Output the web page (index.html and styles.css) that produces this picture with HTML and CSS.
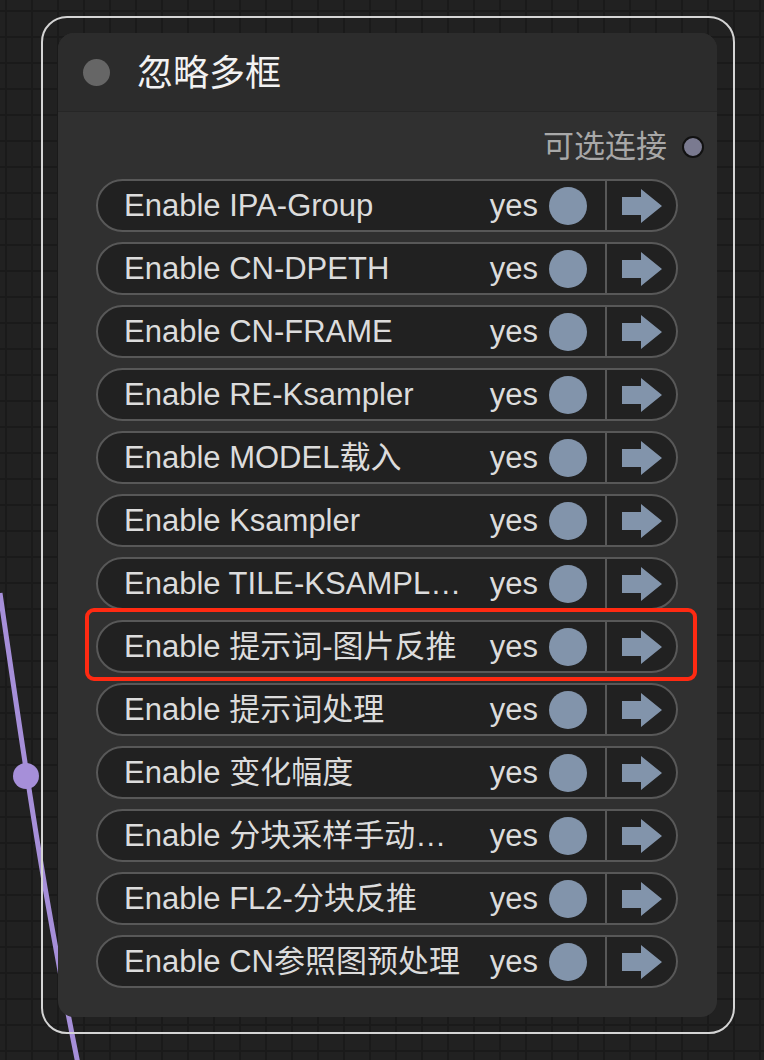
FILE: index.html
```html
<!DOCTYPE html>
<html lang="zh-CN">
  <head>
    <meta charset="UTF-8" />
    <meta name="viewport" content="width=device-width, initial-scale=1.0" />
    <title>忽略多框</title>
    <link rel="stylesheet" href="styles.css">
  </head>
  <body>
    <div class="canvas">
      <!-- 连线（在节点下面） -->
      <svg class="wire" width="120" height="1060" viewBox="0 0 120 1060">
        <path d="M 0 593 C 30 800, 45 900, 78 1064" />
        <circle cx="26" cy="776" r="13" />
      </svg>

      <div class="node-select">
        <div class="node">
          <div class="node-title">
            <span class="title-dot"></span>
            <span class="title-text">忽略多框</span>
          </div>
          <div class="node-body">
            <div class="output-row">
              <span class="output-label">可选连接</span>
              <span class="slot"></span>
            </div>

            <div class="widget">
              <span class="widget-label">Enable IPA-Group</span>
              <span class="widget-value">yes</span>
              <span class="toggle"></span>
              <span class="go"><svg viewBox="0 0 40 34"><path d="M0 8 H19 V0 L40 17 L19 34 V26 H0 Z" /></svg></span>
            </div>
            <div class="widget">
              <span class="widget-label">Enable CN-DPETH</span>
              <span class="widget-value">yes</span>
              <span class="toggle"></span>
              <span class="go"><svg viewBox="0 0 40 34"><path d="M0 8 H19 V0 L40 17 L19 34 V26 H0 Z" /></svg></span>
            </div>
            <div class="widget">
              <span class="widget-label">Enable CN-FRAME</span>
              <span class="widget-value">yes</span>
              <span class="toggle"></span>
              <span class="go"><svg viewBox="0 0 40 34"><path d="M0 8 H19 V0 L40 17 L19 34 V26 H0 Z" /></svg></span>
            </div>
            <div class="widget">
              <span class="widget-label">Enable RE-Ksampler</span>
              <span class="widget-value">yes</span>
              <span class="toggle"></span>
              <span class="go"><svg viewBox="0 0 40 34"><path d="M0 8 H19 V0 L40 17 L19 34 V26 H0 Z" /></svg></span>
            </div>
            <div class="widget">
              <span class="widget-label">Enable MODEL载入</span>
              <span class="widget-value">yes</span>
              <span class="toggle"></span>
              <span class="go"><svg viewBox="0 0 40 34"><path d="M0 8 H19 V0 L40 17 L19 34 V26 H0 Z" /></svg></span>
            </div>
            <div class="widget">
              <span class="widget-label">Enable Ksampler</span>
              <span class="widget-value">yes</span>
              <span class="toggle"></span>
              <span class="go"><svg viewBox="0 0 40 34"><path d="M0 8 H19 V0 L40 17 L19 34 V26 H0 Z" /></svg></span>
            </div>
            <div class="widget">
              <span class="widget-label">Enable TILE-KSAMPL…</span>
              <span class="widget-value">yes</span>
              <span class="toggle"></span>
              <span class="go"><svg viewBox="0 0 40 34"><path d="M0 8 H19 V0 L40 17 L19 34 V26 H0 Z" /></svg></span>
            </div>
            <div class="widget">
              <span class="widget-label">Enable 提示词-图片反推</span>
              <span class="widget-value">yes</span>
              <span class="toggle"></span>
              <span class="go"><svg viewBox="0 0 40 34"><path d="M0 8 H19 V0 L40 17 L19 34 V26 H0 Z" /></svg></span>
            </div>
            <div class="widget">
              <span class="widget-label">Enable 提示词处理</span>
              <span class="widget-value">yes</span>
              <span class="toggle"></span>
              <span class="go"><svg viewBox="0 0 40 34"><path d="M0 8 H19 V0 L40 17 L19 34 V26 H0 Z" /></svg></span>
            </div>
            <div class="widget">
              <span class="widget-label">Enable 变化幅度</span>
              <span class="widget-value">yes</span>
              <span class="toggle"></span>
              <span class="go"><svg viewBox="0 0 40 34"><path d="M0 8 H19 V0 L40 17 L19 34 V26 H0 Z" /></svg></span>
            </div>
            <div class="widget">
              <span class="widget-label">Enable 分块采样手动…</span>
              <span class="widget-value">yes</span>
              <span class="toggle"></span>
              <span class="go"><svg viewBox="0 0 40 34"><path d="M0 8 H19 V0 L40 17 L19 34 V26 H0 Z" /></svg></span>
            </div>
            <div class="widget">
              <span class="widget-label">Enable FL2-分块反推</span>
              <span class="widget-value">yes</span>
              <span class="toggle"></span>
              <span class="go"><svg viewBox="0 0 40 34"><path d="M0 8 H19 V0 L40 17 L19 34 V26 H0 Z" /></svg></span>
            </div>
            <div class="widget">
              <span class="widget-label">Enable CN参照图预处理</span>
              <span class="widget-value">yes</span>
              <span class="toggle"></span>
              <span class="go"><svg viewBox="0 0 40 34"><path d="M0 8 H19 V0 L40 17 L19 34 V26 H0 Z" /></svg></span>
            </div>
          </div>
        </div>
      </div>

      <!-- 红框标注 -->
      <div class="highlight"></div>
    </div>
  </body>
</html>
```

FILE: styles.css
```css
:root {
  --canvas-bg: #212121;
  --grid-line: #1a1a1a;
  --node-bg: #303030;
  --title-bg: #2c2c2c;
  --widget-bg: #212121;
  --widget-border: #585858;
  --text: #dcdcdc;
  --slate: #8294ab;
  --wire: #a68fd9;
}

body {
  margin: 0;
  overflow: hidden;
  font-family: "Liberation Sans", "Noto Sans CJK SC", sans-serif;
}

.canvas {
  position: relative;
  width: 764px;
  height: 1060px;
  overflow: hidden;
  background-color: var(--canvas-bg);
  background-image:
    linear-gradient(to right, var(--grid-line) 2px, transparent 2px),
    linear-gradient(to bottom, var(--grid-line) 2px, transparent 2px);
  background-size: 26px 26px;
  background-position: 5px 10px;
}

.wire {
  position: absolute;
  left: 0;
  top: 0;
}
.wire path {
  fill: none;
  stroke: var(--wire);
  stroke-width: 5;
}
.wire circle {
  fill: var(--wire);
}

/* 选中外框 + 节点 */
.node-select {
  position: absolute;
  left: 41px;
  top: 16px;
  width: 694px;
  height: 1018px;
  box-sizing: border-box;
  padding: 15px 16px 15px 15px;
  border: 2px solid #d4d4d4;
  border-radius: 26px;
  display: flex;
}

.node {
  flex: 1;
  display: flex;
  flex-direction: column;
  background: var(--node-bg);
  border-radius: 16px;
  overflow: hidden;
}

.node-title {
  height: 79px;
  box-sizing: border-box;
  flex-shrink: 0;
  display: flex;
  align-items: center;
  background: var(--title-bg);
  border-bottom: 1px solid #262626;
  padding-left: 25px;
}

.title-dot {
  width: 27px;
  height: 27px;
  border-radius: 50%;
  background: #666;
}

.title-text {
  margin-left: 27px;
  font-size: 36px;
  color: #f2f2f2;
  line-height: 1.2;
  padding-top: 4px;
}

.node-body {
  display: flex;
  flex-direction: column;
  gap: 10px;
  padding: 1px 39px 0 38px;
}

.output-row {
  height: 56px;
  box-sizing: border-box;
  padding-top: 12px;
  display: flex;
  align-items: center;
  justify-content: flex-end;
  gap: 15px;
  margin-right: -26px;
}

.output-label {
  font-size: 31px;
  line-height: 1.2;
  color: #a8a8a8;
}

.slot {
  width: 18px;
  height: 18px;
  border-radius: 50%;
  background: #7a7a90;
  border: 2px solid #111;
}

/* 开关行 */
.widget {
  height: 53px;
  box-sizing: border-box;
  display: flex;
  align-items: center;
  background: var(--widget-bg);
  border: 2px solid var(--widget-border);
  border-radius: 27px;
  color: var(--text);
  font-size: 31px;
  line-height: 1;
}

.widget-label {
  flex: 1;
  min-width: 0;
  padding-left: 26px;
  white-space: nowrap;
}

.widget-value {
  margin-left: 12px;
}

.toggle {
  width: 38px;
  height: 38px;
  border-radius: 50%;
  background: var(--slate);
  margin-left: 11px;
  margin-right: 18px;
}

.go {
  align-self: stretch;
  width: 71px;
  border-left: 2px solid var(--widget-border);
  display: flex;
  align-items: center;
  padding-left: 15px;
  box-sizing: border-box;
}

.go svg {
  width: 40px;
  height: 34px;
  fill: var(--slate);
}

.highlight {
  position: absolute;
  left: 85px;
  top: 608px;
  width: 612px;
  height: 73px;
  box-sizing: border-box;
  border: 4px solid #ff2a12;
  border-radius: 9px;
}
```
